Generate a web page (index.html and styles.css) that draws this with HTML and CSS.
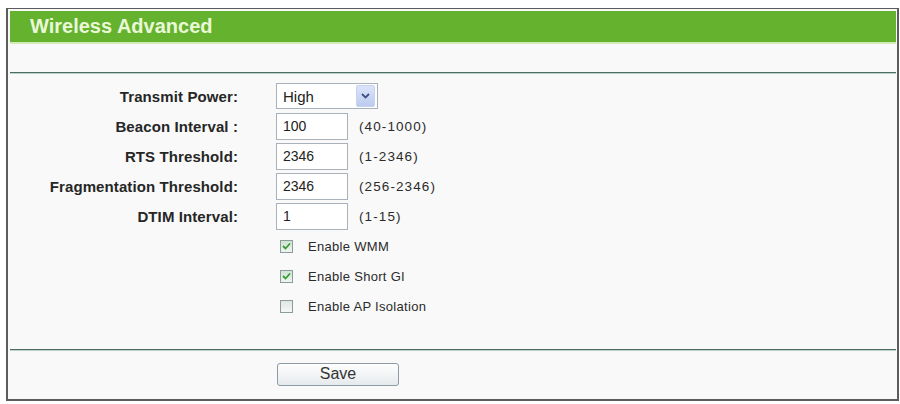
FILE: index.html
```html
<!DOCTYPE html>
<html lang="en">
<head>
  <meta charset="UTF-8" />
  <title>Wireless Advanced</title>
  <link rel="stylesheet" href="styles.css">
</head>
<body>
  <div class="panel">
    <div class="title-bar">Wireless Advanced</div>
    <div class="spacer"></div>
    <div class="divider"></div>

    <div class="form">
      <div class="row">
        <label class="label">Transmit Power:</label>
        <div class="field">
          <div class="select">
            <span class="select-value">High</span>
            <span class="select-btn">
              <svg width="9" height="6" viewBox="0 0 9 6"><path d="M1 1 L4.5 4.5 L8 1" fill="none" stroke="#3d5384" stroke-width="1.8"/></svg>
            </span>
          </div>
        </div>
      </div>
      <div class="row">
        <label class="label">Beacon Interval :</label>
        <div class="field">
          <input class="text" type="text" value="100">
          <span class="range">(40-1000)</span>
        </div>
      </div>
      <div class="row">
        <label class="label">RTS Threshold:</label>
        <div class="field">
          <input class="text" type="text" value="2346">
          <span class="range">(1-2346)</span>
        </div>
      </div>
      <div class="row">
        <label class="label">Fragmentation Threshold:</label>
        <div class="field">
          <input class="text" type="text" value="2346">
          <span class="range">(256-2346)</span>
        </div>
      </div>
      <div class="row">
        <label class="label">DTIM Interval:</label>
        <div class="field">
          <input class="text" type="text" value="1">
          <span class="range">(1-15)</span>
        </div>
      </div>
      <div class="row">
        <div class="label"></div>
        <div class="field check-field">
          <span class="check on">
            <svg width="9" height="8" viewBox="0 0 9 8"><path d="M1 4 L3.5 6.5 L8 1.5" fill="none" stroke="#3a9a3a" stroke-width="1.8"/></svg>
          </span>
          <span class="check-label">Enable WMM</span>
        </div>
      </div>
      <div class="row">
        <div class="label"></div>
        <div class="field check-field">
          <span class="check on">
            <svg width="9" height="8" viewBox="0 0 9 8"><path d="M1 4 L3.5 6.5 L8 1.5" fill="none" stroke="#3a9a3a" stroke-width="1.8"/></svg>
          </span>
          <span class="check-label">Enable Short GI</span>
        </div>
      </div>
      <div class="row">
        <div class="label"></div>
        <div class="field check-field">
          <span class="check"></span>
          <span class="check-label">Enable AP Isolation</span>
        </div>
      </div>
    </div>

    <div class="divider bottom"></div>

    <div class="actions">
      <div class="label"></div>
      <button class="save" type="button">Save</button>
    </div>
  </div>
</body>
</html>
```

FILE: styles.css
```css
body {
  margin: 0;
  background: #ffffff;
  font-family: "Liberation Sans", Arial, sans-serif;
  color: #2b2b2b;
}

.panel {
  width: 886px;
  height: 388px;
  margin: 8px 0 0 6px;
  padding: 2px 1px 0 2px;
  border: 1px solid #5c5c5c;
  border-width: 1px 2px 2px 2px;
  background: #f9f9f9;
  box-sizing: content-box;
  display: flex;
  flex-direction: column;
}

.title-bar {
  height: 31px;
  line-height: 30px;
  padding-left: 20px;
  background: #64b22e;
  border-bottom: 2px solid #d3ebb8;
  color: #eaf8d8;
  font-size: 20px;
  font-weight: bold;
}

.spacer {
  height: 28px;
}

.divider {
  height: 1px;
  border-top: 1px solid #4f6b63;
  background: #b9d2ca;
}

.form {
  padding-top: 7px;
}

.row,
.actions {
  display: grid;
  grid-template-columns: 228px 1fr;
  column-gap: 38px;
  align-items: center;
  height: 30px;
}

.label {
  text-align: right;
  font-size: 15px;
  font-weight: bold;
  color: #262626;
  letter-spacing: 0.1px;
}

.field {
  display: flex;
  align-items: center;
}

.select {
  width: 100px;
  height: 24px;
  border: 1px solid #aab3bd;
  background: #ffffff;
  display: flex;
  align-items: center;
  justify-content: space-between;
}

.select-value {
  padding-left: 6px;
  font-size: 15px;
  color: #222;
}

.select-btn {
  width: 17px;
  height: 20px;
  margin-right: 2px;
  background: linear-gradient(#dbe4fa, #bccbf0);
  border: 1px solid #c7d2ee;
  border-radius: 2px;
  display: flex;
  align-items: center;
  justify-content: center;
}

.text {
  width: 72px;
  height: 27px;
  box-sizing: border-box;
  padding: 0 6px;
  border: 1px solid #a9b1ba;
  background: #ffffff;
  font-family: "Liberation Sans", Arial, sans-serif;
  font-size: 14px;
  color: #222;
  outline: none;
}

.range {
  margin-left: 11px;
  font-size: 13.5px;
  letter-spacing: 1.1px;
  color: #2b2b2b;
}

.check-field {
  padding-left: 4px;
}

.check {
  width: 11px;
  height: 11px;
  border: 1px solid #8c9c9c;
  background: linear-gradient(#dfe6e2, #f6f8f6);
  display: flex;
  align-items: center;
  justify-content: center;
}

.check.on {
  background: linear-gradient(#cfe3d0, #eef6ee);
}

.check-label {
  margin-left: 15px;
  font-size: 13px;
  letter-spacing: 0.3px;
  color: #2b2b2b;
}

.divider.bottom {
  margin-top: 28px;
}

.actions {
  height: 46px;
}

.save {
  width: 122px;
  height: 23px;
  margin-left: 1px;
  border: 1px solid #8c9ca4;
  border-radius: 3px;
  background: linear-gradient(#fefefe, #e6eaec);
  font-family: "Liberation Sans", Arial, sans-serif;
  font-size: 16px;
  color: #333;
  padding: 0;
}
```
